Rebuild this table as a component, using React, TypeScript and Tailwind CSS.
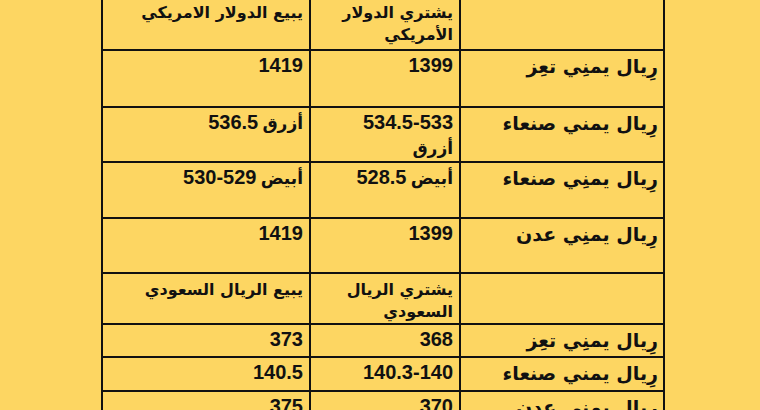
type Row = { label: string; buy: string[]; sell: string[]; h: string; header?: boolean; stackBuy?: boolean };

const rows: Row[] = [
  { label: '', buy: ['يشتري الدولار الأمريكي'], sell: ['يبيع  الدولار الامريكي'], h: 'h-[54px]', header: true },
  { label: 'رِيال يمنِي تعِز', buy: ['1399'], sell: ['1419'], h: 'h-[57px]' },
  { label: 'رِيال يمني صنعاء', buy: ['534.5-533', 'أزرق'], sell: ['536.5', 'أزرق'], h: 'h-[54px]', stackBuy: true },
  { label: 'رِيال يمنِي صنعاء', buy: ['528.5', 'أبيض'], sell: ['530-529', 'أبيض'], h: 'h-[56px]' },
  { label: 'رِيال يمنِي عدن', buy: ['1399'], sell: ['1419'], h: 'h-[55px]' },
  { label: '', buy: ['يشتري الريال السعودي'], sell: ['يبيع  الريال السعودي'], h: 'h-[51px]', header: true },
  { label: 'رِيال يمنِي تعِز', buy: ['368'], sell: ['373'], h: 'h-[33px]' },
  { label: 'رِيال يمني صنعاء', buy: ['140.3-140'], sell: ['140.5'], h: 'h-[34px]' },
  { label: 'رِيال يمنِي عدن', buy: ['370'], sell: ['375'], h: 'h-[34px]' },
];

const arabic = "font-['DejaVu_Sans','Liberation_Sans',sans-serif]";
const latin = "font-['Liberation_Sans','DejaVu_Sans',sans-serif]";

function Value({ parts, stack }: { parts: string[]; stack?: boolean }) {
  // number sits on the right, the colour word to its left
  return (
    <div className="leading-[26px]">
      {parts.map((p, i) => {
        const isNum = /[0-9]/.test(p);
        const cls = isNum ? `${latin} text-[20px]` : `${arabic} text-[17px]`;
        if (stack) {
          return (
            <div key={i} className={cls}>
              <bdi dir={isNum ? 'ltr' : 'rtl'}>{p}</bdi>
            </div>
          );
        }
        return (
          <span key={i}>
            {i > 0 ? ' ' : ''}
            <bdi dir={isNum ? 'ltr' : 'rtl'} className={cls}>
              {p}
            </bdi>
          </span>
        );
      })}
    </div>
  );
}

const cell = 'border-2 border-[#111] align-top text-right';

export default function App() {
  return (
    <div className="w-full h-[410px] overflow-hidden bg-[#fdd662] text-[#111]">
      <table dir="ltr" className="ml-[101px] -mt-[5px] border-collapse table-fixed w-[562px] font-bold">
        <colgroup>
          <col className="w-[208px]" />
          <col className="w-[150px]" />
          <col className="w-[204px]" />
        </colgroup>
        <tbody>
          {rows.map((r, i) => (
            <tr key={i} className={r.h}>
              {r.header ? (
                <>
                  <td dir="rtl" className={`${cell} pr-[6px] pt-[5px] ${arabic} text-[16px] leading-[22px]`}>
                    {r.sell[0]}
                  </td>
                  <td dir="rtl" className={`${cell} pr-[6px] pt-[5px] ${arabic} text-[16px] leading-[22px]`}>
                    {r.buy[0]}
                  </td>
                </>
              ) : (
                <>
                  <td className={`${cell} pr-[6px] pt-[1px]`}>
                    <Value parts={r.sell} />
                  </td>
                  <td className={`${cell} pr-[6px] pt-[1px]`}>
                    <Value parts={r.buy} stack={r.stackBuy} />
                  </td>
                </>
              )}
              <td dir="rtl" className={`${cell} pr-[5px] pt-[3px] ${arabic} text-[19px] leading-[24px]`}>
                {r.label}
              </td>
            </tr>
          ))}
        </tbody>
      </table>
    </div>
  );
}
